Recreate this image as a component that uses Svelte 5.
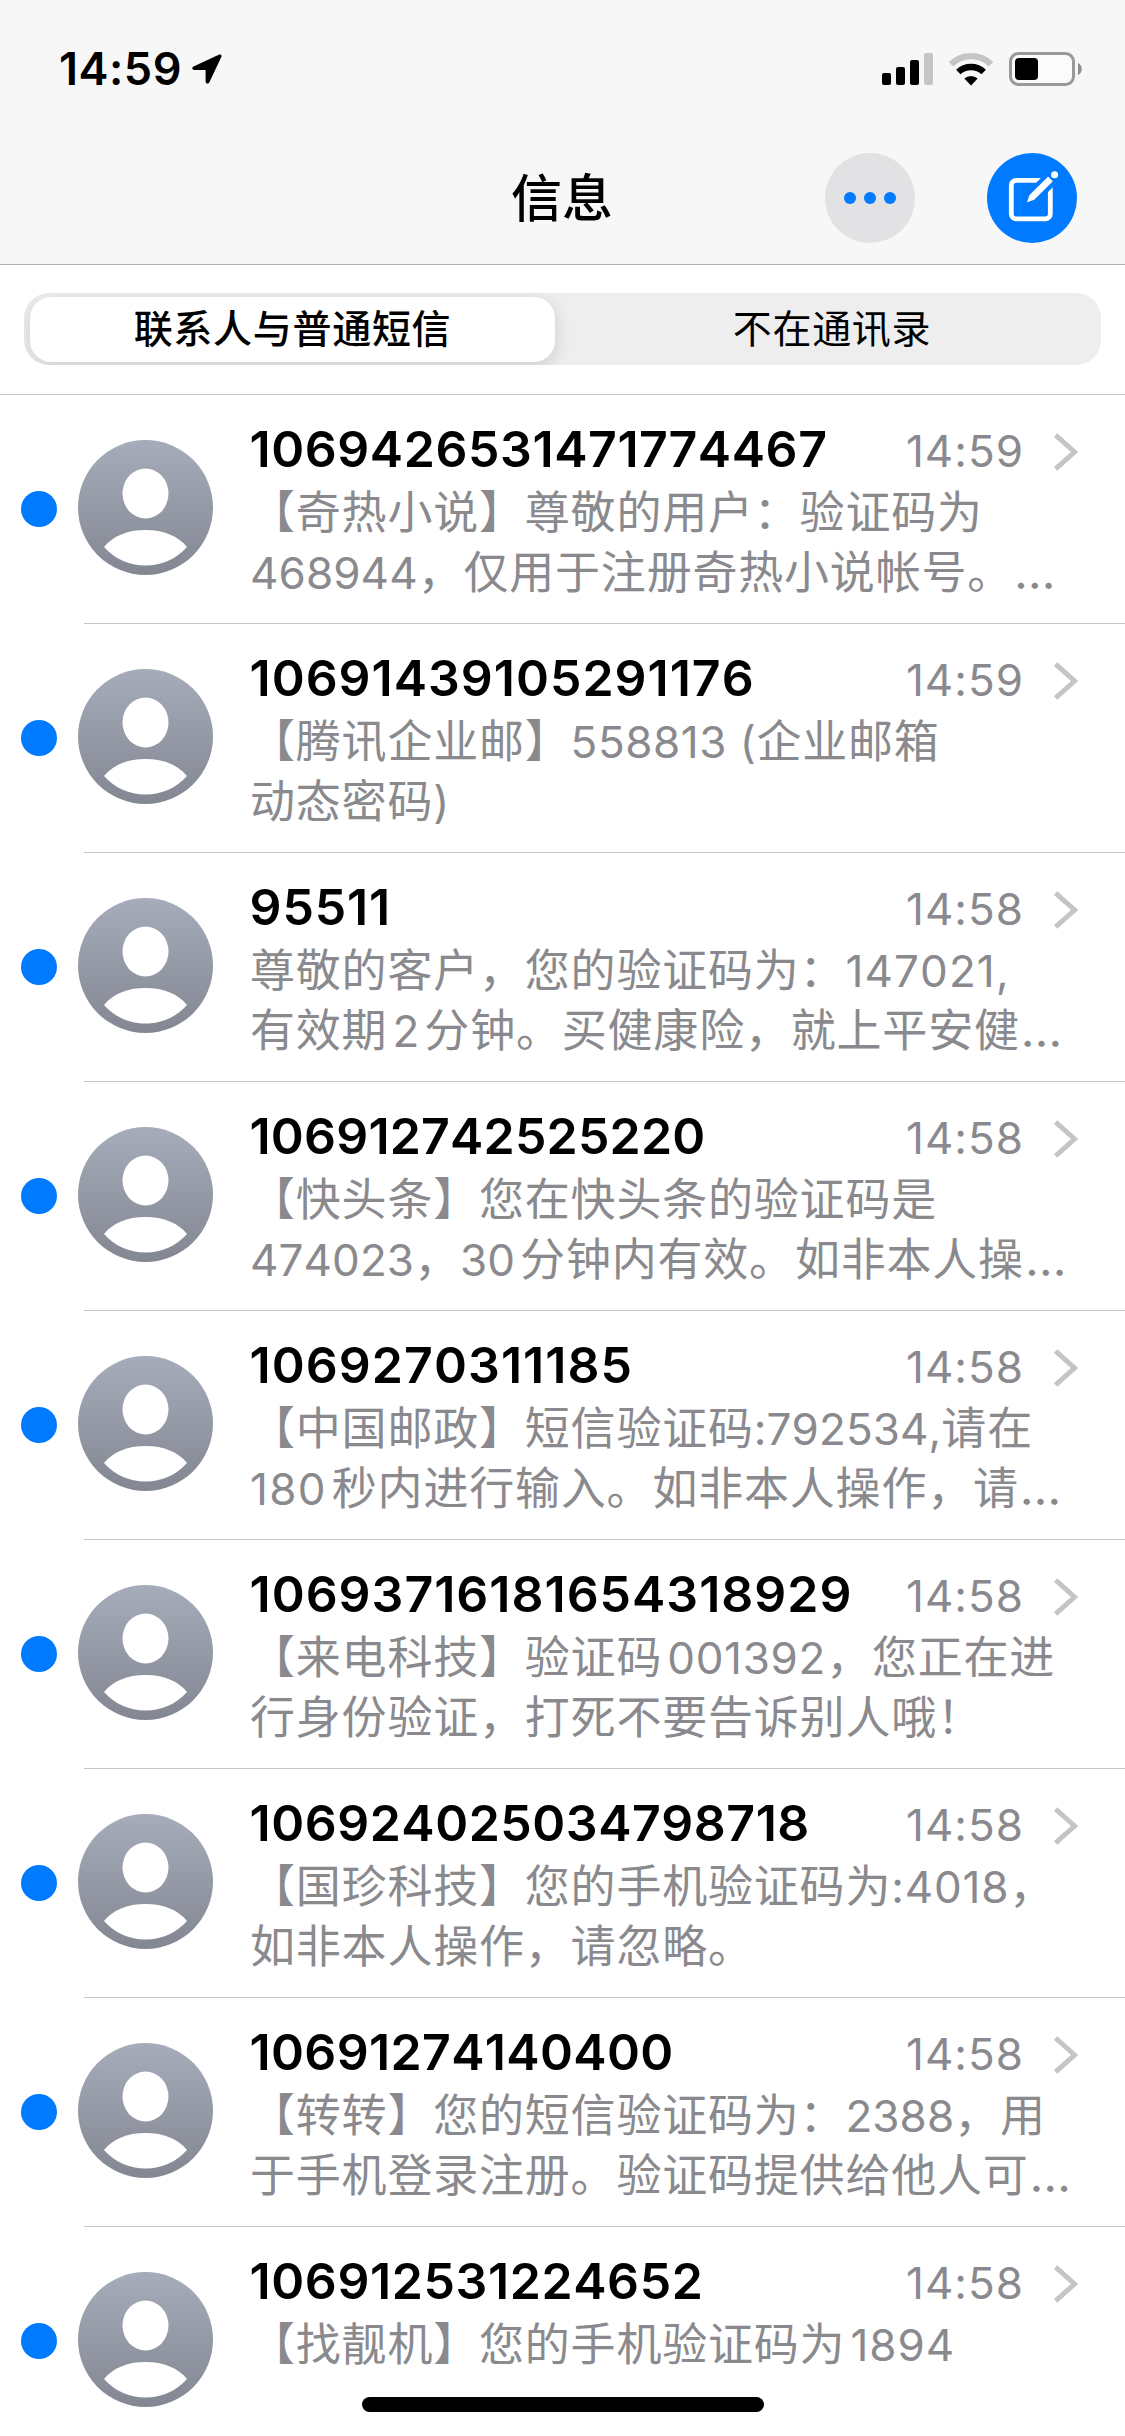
<script>
  const tabs = ['联系人与普通短信', '不在通讯录'];
  let active = $state(0);

  const messages = [
    { from: '1069426531471774467', tracking: 0.57, time: '14:59', lines: ['【奇热小说】尊敬的用户：验证码为', '468944，仅用于注册奇热小说帐号。…'] },
    { from: '10691439105291176', tracking: 1, time: '14:59', lines: ['【腾讯企业邮】558813 (企业邮箱', '动态密码)'] },
    { from: '95511', tracking: 0.9, time: '14:58', lines: ['尊敬的客户，您的验证码为：147021,', '有效期2分钟。买健康险，就上平安健…'] },
    { from: '106912742525220', tracking: 0.2, time: '14:58', lines: ['【快头条】您在快头条的验证码是', '474023，30分钟内有效。如非本人操…'] },
    { from: '1069270311185', tracking: 1.07, time: '14:58', lines: ['【中国邮政】短信验证码:792534,请在', '180秒内进行输入。如非本人操作，请…'] },
    { from: '10693716181654318929', tracking: 1, time: '14:58', lines: ['【来电科技】验证码001392，您正在进', '行身份验证，打死不要告诉别人哦！'] },
    { from: '106924025034798718', tracking: 0.52, time: '14:58', lines: ['【国珍科技】您的手机验证码为:4018，', '如非本人操作，请忽略。'] },
    { from: '10691274140400', tracking: 0.35, time: '14:58', lines: ['【转转】您的短信验证码为：2388，用', '于手机登录注册。验证码提供给他人可…'] },
    { from: '106912531224652', tracking: 0.6, time: '14:58', lines: ['【找靓机】您的手机验证码为1894'] },
  ];

  // latin runs get their own tracking, plus a small gap where a digit meets a han character
  const isHan = (c) => /\p{Script=Han}/u.test(c || '');
  const runs = (line) => {
    const parts = line.match(/[\x20-\x7e]+|…|[^\x20-\x7e…]+/g);
    return parts.map((text, i) => ({
      text,
      latin: text.charCodeAt(0) < 128,
      // the narrow 1 needs more room
      tracking: 0.1 + (3.6 * (text.split('1').length - 1)) / text.length,
      before: /^\d/.test(text) && isHan(parts[i - 1]?.at(-1)),
      after: /\d$/.test(text) && isHan(parts[i + 1]?.[0]),
    }));
  };
</script>

{#snippet avatar()}
  <svg class="avatar" viewBox="0 0 135 135">
    <defs>
      <linearGradient id="face" x1="0" y1="0" x2="0" y2="1">
        <stop offset="0" stop-color="#a6acba" />
        <stop offset="1" stop-color="#838792" />
      </linearGradient>
    </defs>
    <circle cx="67.5" cy="67.5" r="67.5" fill="url(#face)" />
    <ellipse cx="67.5" cy="53.5" rx="23" ry="25" fill="#fff" />
    <path d="M26 107C35 96 49 90 67.500 90S100 96 109 107C98 119 84 125.500 67.500 125.500S37 119 26 107z" fill="#fff" />
  </svg>
{/snippet}

<div class="screen">
  <header>
    <div class="status">
      <div class="clock">
        <span>14:59</span>
        <svg width="30" height="30" viewBox="0 0 30 30">
          <path d="M27.300.6 1.500 12.600C-.5 13.600.1 15.900 2.100 15.900H13.600V27.500C13.600 30 16.500 30.300 17.400 28.300L29.300 3C30 1.300 29 0 27.300.6z" />
        </svg>
      </div>
      <div class="signals">
        <svg width="51" height="34" viewBox="0 0 51 34">
          <rect x="0" y="21" width="9" height="12" rx="2" />
          <rect x="14" y="15" width="9" height="18" rx="2" />
          <rect x="28" y="8" width="9" height="25" rx="2" />
          <rect x="42" y="1" width="9" height="32" rx="2" fill="#c5c5c5" />
        </svg>
        <svg class="wifi" width="46" height="34" viewBox="0 0 46 34">
          <path d="M3 12.300A28.500 28.500 0 0 1 43 12.300" fill="none" stroke="#c5c5c5" stroke-width="6.400" />
          <path d="M10.300 20A18.500 18.500 0 0 1 35.700 20" fill="none" stroke="#000" stroke-width="6.400" />
          <path d="M16.300 26.500A10.200 10.200 0 0 1 29.700 26.500L23 33.500z" />
        </svg>
        <svg width="74" height="34" viewBox="0 0 74 34">
          <rect x="1.500" y="1.500" width="63" height="31" rx="8" fill="#fbfbfb" stroke="#999" stroke-width="3" />
          <rect x="6" y="6" width="23" height="22" rx="4" />
          <path d="M69 11c5 2 5 10 0 12z" fill="#8e8e8e" />
        </svg>
      </div>
    </div>

    <div class="nav">
      <h1>信息</h1>
      <button class="round more" aria-label="更多">
        <svg width="52" height="12" viewBox="0 0 52 12">
          <circle cx="6" cy="6" r="6" /><circle cx="26" cy="6" r="6" /><circle cx="46" cy="6" r="6" />
        </svg>
      </button>
      <button class="round compose" aria-label="新信息">
        <svg width="90" height="90" viewBox="0 0 90 90">
          <rect x="24.300" y="27.300" width="39" height="38.500" rx="5" fill="none" stroke="#fff" stroke-width="4.800" />
          <path d="M45 44.500L75 14.500" stroke="#007aff" stroke-width="15" />
          <path d="M40 49.300l2.500-7.200L61.200 23.500l4.700 4.700L47.200 46.800z" fill="#fff" />
          <path d="M61.500 22.500l5.500 5.500" stroke="#007aff" stroke-width="1.200" />
          <circle cx="67.600" cy="21.800" r="3.500" fill="#fff" />
        </svg>
      </button>
    </div>
  </header>

  <div class="filter">
    <div class="segmented">
      {#each tabs as tab, i}
        <button class:active={active === i} onclick={() => (active = i)}>{tab}</button>
      {/each}
    </div>
  </div>

  <ul>
    {#each messages as m}
      <li>
        <span class="unread"></span>
        {@render avatar()}
        <div class="content">
          <div class="top">
            <strong style:letter-spacing="{m.tracking}px">{m.from}</strong>
            <time>{m.time}</time>
            <svg class="chevron" width="24" height="38" viewBox="0 0 24 38">
              <path d="M1.600 2 20.500 19 1.600 36" fill="none" stroke="#c5c5c7" stroke-width="5" />
            </svg>
          </div>
          {#each m.lines as line}
            <p>{#each runs(line) as r}{#if r.latin}<span class="latin" class:before={r.before} class:after={r.after} style:letter-spacing="{r.tracking}px">{r.text}</span>{:else if r.text === '…'}<span class="dots">…</span>{:else}{r.text}{/if}{/each}</p>
          {/each}
        </div>
      </li>
    {/each}
  </ul>

  <div class="home"></div>
</div>

<style>
  :global(body) {
    margin: 0;
    background: #fff;
  }
  .screen {
    position: relative;
    width: 1125px;
    height: 2436px;
    overflow: hidden;
    background: #fff;
    color: #000;
    font-family: Inter, 'Noto Sans CJK SC', sans-serif;
    font-kerning: none;
  }
  header {
    height: 264px;
    background: #f7f7f7;
    border-bottom: 1px solid #b2b2b2;
  }
  .status {
    display: flex;
    justify-content: space-between;
    align-items: flex-start;
    height: 153px;
    padding: 0 42px 0 59px;
    box-sizing: border-box;
  }
  .clock {
    display: flex;
    padding-top: 42px;
    font-size: 45px;
    font-weight: 600;
    line-height: 54px;
  }
  .clock span {
    width: 121px;
    letter-spacing: 0.5px;
  }
  .clock svg {
    margin: 12px 0 0 12px;
  }
  .signals {
    display: flex;
    padding-top: 52px;
  }
  .wifi {
    margin: 0 15px;
  }
  .nav {
    display: grid;
    grid-template-columns: 1fr 90px 90px;
    column-gap: 72px;
    padding-right: 48px;
    align-items: center;
  }
  h1 {
    margin: 0 0 0 511px;
    padding-top: 2px;
    font-size: 51px;
    line-height: 88px;
    font-weight: 500;
    white-space: nowrap;
  }
  button {
    border: 0;
    padding: 0;
    font: inherit;
    color: inherit;
    background: none;
  }
  .round {
    display: flex;
    align-items: center;
    justify-content: center;
    width: 90px;
    height: 90px;
    border-radius: 50%;
  }
  .more {
    background: #e2e2e4;
    fill: #007aff;
  }
  .compose {
    background: #007aff;
  }
  .filter {
    height: 130px;
    padding: 28px 24px 0;
    box-sizing: border-box;
    border-bottom: 1px solid #c6c6c8;
  }
  .segmented {
    display: grid;
    grid-template-columns: 525px 1fr;
    height: 72px;
    padding: 3.5px 0 3.5px 6px;
    box-sizing: border-box;
    border-radius: 25px;
    background: #eeeeef;
    overflow: hidden;
  }
  .segmented button {
    border-radius: 21px;
    font-size: 39px;
    letter-spacing: 0.7px;
    line-height: 64px;
  }
  .segmented button:last-child {
    padding-left: 8px;
  }
  .segmented .active {
    background: #fff;
    font-weight: 500;
    box-shadow: 0 5px 18px rgba(0, 0, 0, 0.14);
  }
  ul {
    margin: 0;
    padding: 0;
    list-style: none;
  }
  li {
    position: relative;
    display: flex;
    height: 229px;
    padding-left: 21px;
    box-sizing: border-box;
  }
  li::after {
    content: '';
    position: absolute;
    left: 84px;
    right: 0;
    bottom: 0;
    height: 1px;
    background: #c6c6c8;
  }
  .unread {
    width: 36px;
    height: 36px;
    margin: 96px 21px 0 0;
    border-radius: 50%;
    background: #007aff;
  }
  .avatar {
    width: 135px;
    height: 135px;
    margin: 45px 37px 0 0;
  }
  .content {
    flex: 1;
    min-width: 0;
    padding-top: 24px;
  }
  .top {
    display: flex;
    height: 64px;
    padding-right: 47px;
    line-height: 61px;
  }
  strong {
    margin-left: -0.5px;
    font-size: 50px;
    font-weight: 600;
  }
  time {
    margin-left: auto;
    color: #8a8a8e;
    font-size: 44px;
    line-height: 64px;
    letter-spacing: 1px;
  }
  .chevron {
    margin: 14px 0 0 30px;
  }
  p {
    margin: 0;
    color: #8a8a8e;
    font-size: 45px;
    line-height: 60px;
    letter-spacing: 0.8px;
    white-space: pre;
  }
  .latin {
    font-size: 44px;
  }
  .before {
    margin-left: 5px;
  }
  .after {
    margin-right: 5px;
  }
  .dots {
    margin-left: 1px;
    letter-spacing: 0;
    font-size: 48px;
    line-height: 1;
  }
  .home {
    position: absolute;
    left: 362px;
    bottom: 24px;
    width: 402px;
    height: 15px;
    border-radius: 8px;
    background: #000;
  }
</style>
